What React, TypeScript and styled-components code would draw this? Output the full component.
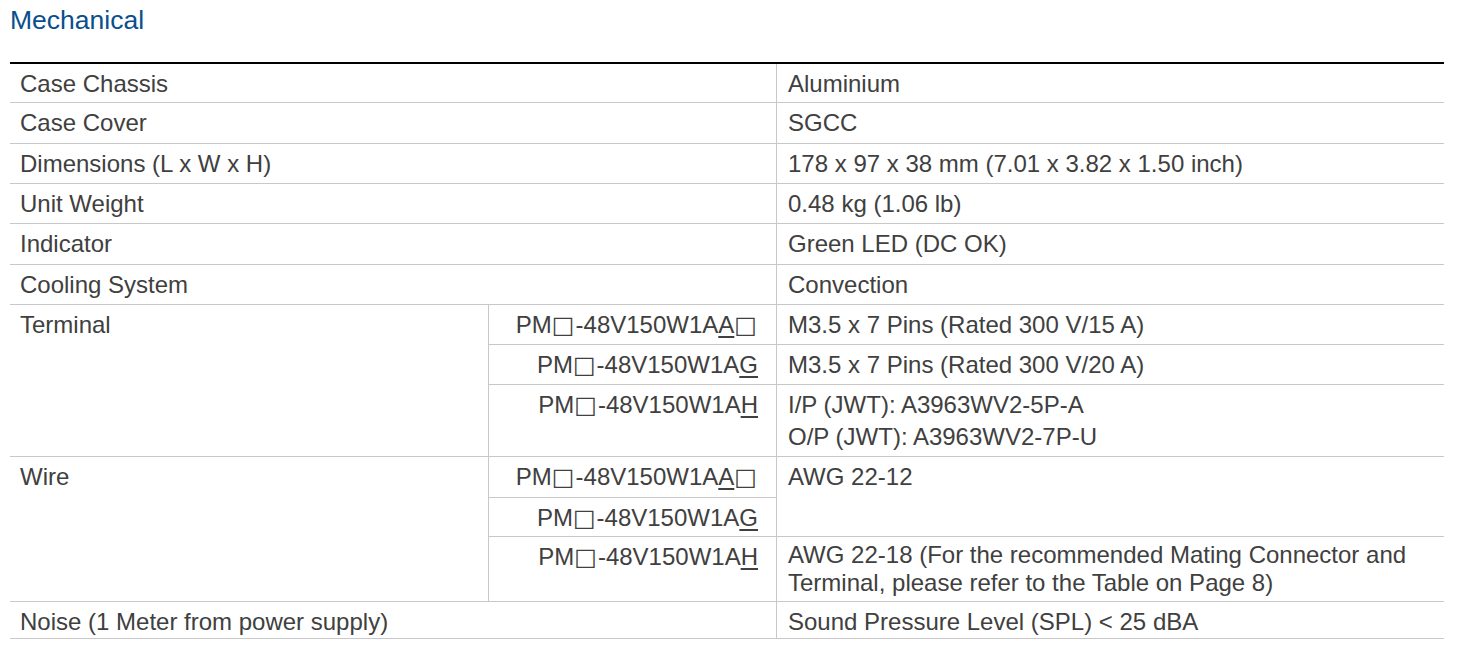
import React from "react";
import styled, { createGlobalStyle } from "styled-components";

const Global = createGlobalStyle`
  html, body { margin: 0; padding: 0; background: #ffffff; }
  body { font-family: "Liberation Sans", Arial, "DejaVu Sans", sans-serif; }
`;

const Page = styled.div`
  padding: 5px 34px 0 10px;
`;

const Title = styled.h2`
  margin: 0 0 27px 0;
  font-size: 26.5px;
  line-height: 30px;
  font-weight: 400;
  color: #0a4f8d;
`;

const Table = styled.table`
  width: 1434px;
  table-layout: fixed;
  border-collapse: separate;
  border-spacing: 0;
  border-top: 2px solid #000000;
  color: #404040;
  font-size: 24px;
  line-height: 32px;
`;

const Row = styled.tr<{ $h: number }>`
  height: ${(p) => p.$h}px;
`;

const Cell = styled.td<{ $model?: boolean; $divider?: boolean; $lh?: number }>`
  box-sizing: border-box;
  vertical-align: top;
  padding: ${(p) => (p.$model ? "4px 18px 0 10px" : p.$divider ? "4px 10px 0 11px" : "4px 10px 0 10px")};
  text-align: ${(p) => (p.$model ? "right" : "left")};
  line-height: ${(p) => (p.$lh ? `${p.$lh}px` : "inherit")};
  border-bottom: 1px solid #c8c8c8;
  border-left: ${(p) => (p.$model || p.$divider ? "1px solid #c8c8c8" : "none")};
  white-space: ${(p) => (p.$model ? "nowrap" : "normal")};
`;

const Mark = styled.span`
  text-decoration: underline;
  text-decoration-thickness: 1.5px;
  text-underline-offset: 3px;
`;

const Box = styled.span`
  font-family: "DejaVu Sans", sans-serif;
  letter-spacing: 1px;
`;

const Model: React.FC<{ suffix: string; box?: boolean }> = ({ suffix, box }) => (
  <>
    PM<Box>□</Box>-48V150W1A<Mark>{suffix}</Mark>
    {box ? <Box>□</Box> : null}
  </>
);

export default function App() {
  return (
    <Page>
      <Global />
      <Title>Mechanical</Title>
      <Table>
        <colgroup>
          <col style={{ width: 478 }} />
          <col style={{ width: 288 }} />
          <col style={{ width: 668 }} />
        </colgroup>
        <tbody>
          <Row $h={39}>
            <Cell colSpan={2}>Case Chassis</Cell>
            <Cell $divider>Aluminium</Cell>
          </Row>
          <Row $h={41}>
            <Cell colSpan={2}>Case Cover</Cell>
            <Cell $divider>SGCC</Cell>
          </Row>
          <Row $h={40}>
            <Cell colSpan={2}>Dimensions (L x W x H)</Cell>
            <Cell $divider>178 x 97 x 38 mm (7.01 x 3.82 x 1.50 inch)</Cell>
          </Row>
          <Row $h={40}>
            <Cell colSpan={2}>Unit Weight</Cell>
            <Cell $divider>0.48 kg (1.06 lb)</Cell>
          </Row>
          <Row $h={41}>
            <Cell colSpan={2}>Indicator</Cell>
            <Cell $divider>Green LED (DC OK)</Cell>
          </Row>
          <Row $h={40}>
            <Cell colSpan={2}>Cooling System</Cell>
            <Cell $divider>Convection</Cell>
          </Row>
          <Row $h={40}>
            <Cell rowSpan={3}>Terminal</Cell>
            <Cell $model>
              <Model suffix="A" box />
            </Cell>
            <Cell $divider>M3.5 x 7 Pins (Rated 300 V/15 A)</Cell>
          </Row>
          <Row $h={40}>
            <Cell $model>
              <Model suffix="G" />
            </Cell>
            <Cell $divider>M3.5 x 7 Pins (Rated 300 V/20 A)</Cell>
          </Row>
          <Row $h={72}>
            <Cell $model>
              <Model suffix="H" />
            </Cell>
            <Cell $divider>
              I/P (JWT): A3963WV2-5P-A
              <br />
              O/P (JWT): A3963WV2-7P-U
            </Cell>
          </Row>
          <Row $h={41}>
            <Cell rowSpan={3}>Wire</Cell>
            <Cell $model>
              <Model suffix="A" box />
            </Cell>
            <Cell $divider rowSpan={2}>AWG 22-12</Cell>
          </Row>
          <Row $h={39}>
            <Cell $model>
              <Model suffix="G" />
            </Cell>
          </Row>
          <Row $h={65}>
            <Cell $model>
              <Model suffix="H" />
            </Cell>
            <Cell $divider $lh={28}>
              AWG 22-18 (For the recommended Mating Connector and Terminal, please refer to the Table on Page 8)
            </Cell>
          </Row>
          <Row $h={36}>
            <Cell colSpan={2}>Noise (1 Meter from power supply)</Cell>
            <Cell $divider>Sound Pressure Level (SPL) &lt; 25 dBA</Cell>
          </Row>
        </tbody>
      </Table>
    </Page>
  );
}
